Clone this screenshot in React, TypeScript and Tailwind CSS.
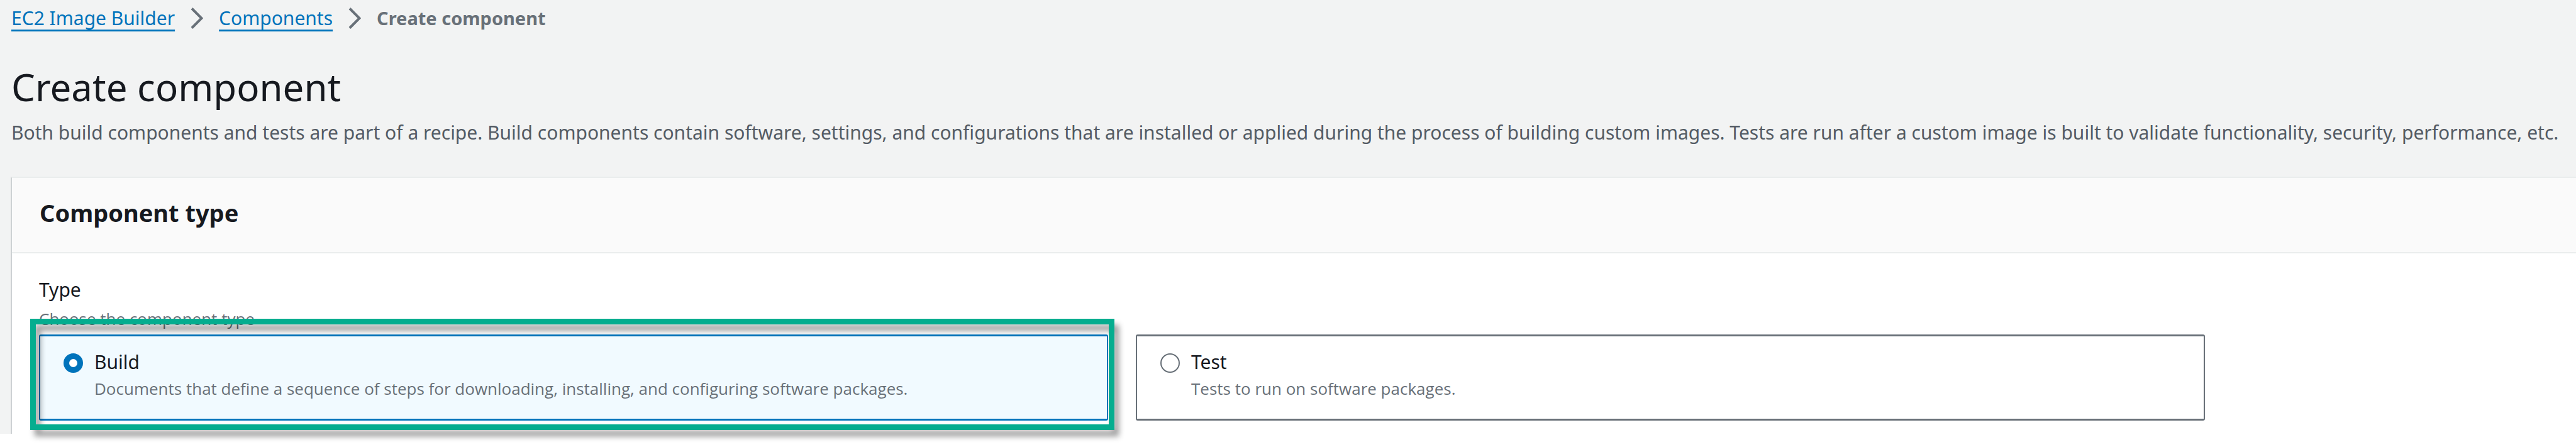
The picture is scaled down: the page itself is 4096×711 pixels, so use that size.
import { useState } from "react";

function Chevron() {
  return (
    <svg className="h-[34px] w-5 shrink-0" viewBox="0 0 20 34" fill="none" stroke="#687078" strokeWidth="4" aria-hidden="true">
      <path d="M2 1.5 17.5 17 2 32.5" />
    </svg>
  );
}

function BreadcrumbLink({ children }: { children: string }) {
  return (
    <a
      href="#"
      className="text-[#0073bb] underline decoration-[3px] underline-offset-[7px] [text-decoration-skip-ink:none]"
    >
      {children}
    </a>
  );
}

type TileProps = {
  value: string;
  title: string;
  description: string;
  selected: boolean;
  onSelect: (value: string) => void;
};

function Tile({ value, title, description, selected, onSelect }: TileProps) {
  return (
    <label
      htmlFor={value}
      className={`flex w-full gap-[18px] rounded-[3px] border-x-2 border-y-[3px] pt-[21px] pb-[30px] pl-[37px] ${
        selected ? "border-[#0073bb] bg-[#f1faff]" : "border-[#687078] bg-white"
      }`}
    >
      <input
        type="radio"
        id={value}
        name="component-type"
        value={value}
        checked={selected}
        onChange={() => onSelect(value)}
        className="mt-[6px] size-[31px] shrink-0 appearance-none rounded-full border-2 border-[#687078] bg-white checked:border-[9px] checked:border-[#0073bb]"
      />
      <span className="flex flex-col gap-1">
        <span className="text-[30px] leading-10 text-[#16191f]">{title}</span>
        <span className="font-['Open_Sans',sans-serif] text-[26px] leading-9 text-[#687078]">{description}</span>
      </span>
    </label>
  );
}

export default function App() {
  const [type, setType] = useState("build");

  return (
    <div className="min-h-screen overflow-hidden bg-white font-['Noto_Sans',sans-serif] text-[30px] leading-10 text-[#16191f]">
      <main className="bg-[#f2f3f3] pt-[9px]">
        <nav aria-label="Breadcrumbs" className="flex items-center gap-[25px] pl-[18px]">
          <BreadcrumbLink>EC2 Image Builder</BreadcrumbLink>
          <Chevron />
          <BreadcrumbLink>Components</BreadcrumbLink>
          <Chevron />
          <span className="text-[29px] font-bold text-[#687078]">Create component</span>
        </nav>

        <header className="pt-[53px] pl-[18px]">
          <h1 className="text-[60px] leading-[72px]">Create component</h1>
          <p className="mt-[17px] whitespace-nowrap text-[#545b64]">
            Both build components and tests are part of a recipe. Build components contain software, settings, and
            configurations that are installed or applied during the process of building custom images. Tests are run
            after a custom image is built to validate functionality, security, performance, etc.
          </p>
        </header>

        <section className="mt-[50px] ml-[17px] border-t-2 border-l-2 border-t-[#eaeded] border-l-[#cdd1d3] bg-white">
          <div className="border-b-2 border-[#eaeded] bg-[#fafafa] pt-[29px] pb-[37px] pl-11">
            <h2 className="text-[38px] leading-[52px] font-bold">Component type</h2>
          </div>

          <fieldset className="pt-[38px] pb-[21px] pl-[43px]">
            <legend className="contents">Type</legend>
            <p className="mt-2 mb-[7px] font-['Open_Sans',sans-serif] text-[26px] leading-9 text-[#687078]">
              Choose the component type
            </p>
            <div className="grid max-w-[3444px] grid-cols-2 gap-11">
              <div className="relative">
                <Tile
                  value="build"
                  title="Build"
                  description="Documents that define a sequence of steps for downloading, installing, and configuring software packages."
                  selected={type === "build"}
                  onSelect={setType}
                />
                <div className="pointer-events-none absolute -top-[25px] -right-[10px] -bottom-[15px] -left-[14px] border-[9px] border-[#05ad8f] drop-shadow-[7px_10px_5px_rgba(0,0,0,0.4)]" />
              </div>
              <Tile
                value="test"
                title="Test"
                description="Tests to run on software packages."
                selected={type === "test"}
                onSelect={setType}
              />
            </div>
          </fieldset>
        </section>
      </main>
    </div>
  );
}
